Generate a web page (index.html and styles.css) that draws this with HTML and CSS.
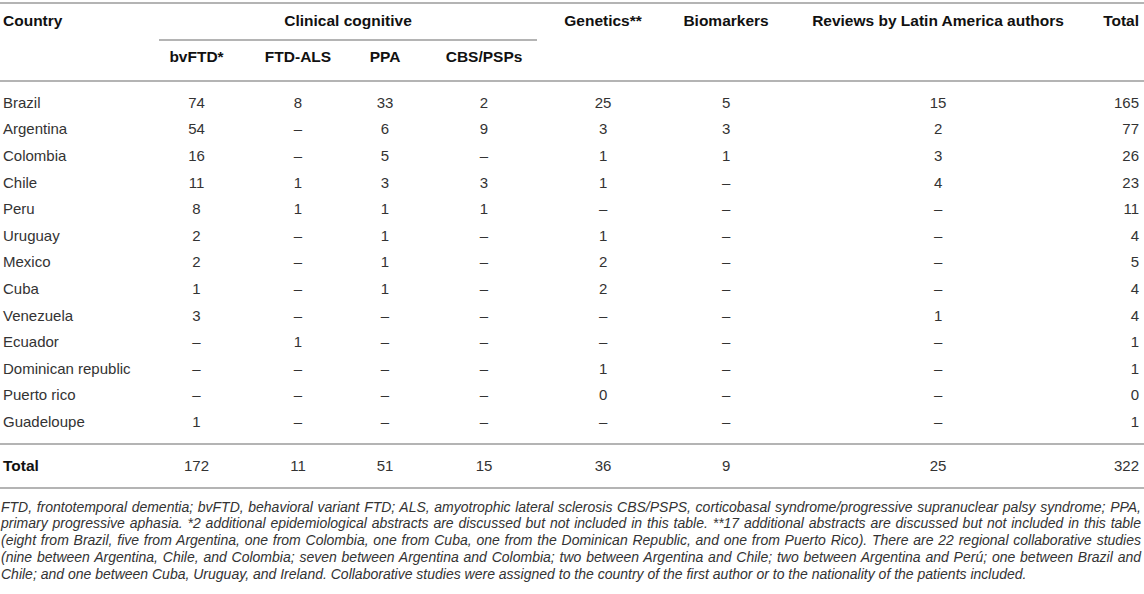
FILE: index.html
```html
<!DOCTYPE html>
<html lang="en">
<head>
<meta charset="utf-8">
<title>Table</title>
<link rel="stylesheet" href="styles.css">
</head>
<body>
<div class="page">
<table class="data">
  <colgroup>
    <col class="c1"><col class="c2"><col class="c3"><col class="c4"><col class="c5"><col class="c6"><col class="c7"><col class="c8"><col class="c9">
  </colgroup>
  <thead>
    <tr class="h1">
      <th rowspan="2" class="left">Country</th>
      <th colspan="4" class="group"><div class="group-label">Clinical cognitive</div></th>
      <th rowspan="2">Genetics**</th>
      <th rowspan="2">Biomarkers</th>
      <th rowspan="2">Reviews by Latin America authors</th>
      <th rowspan="2" class="right">Total</th>
    </tr>
    <tr class="h2">
      <th>bvFTD*</th>
      <th>FTD-ALS</th>
      <th>PPA</th>
      <th>CBS/PSPs</th>
    </tr>
  </thead>
  <tbody>
    <tr class="first"><td class="left">Brazil</td><td>74</td><td>8</td><td>33</td><td>2</td><td>25</td><td>5</td><td>15</td><td class="right">165</td></tr>
    <tr><td class="left">Argentina</td><td>54</td><td>–</td><td>6</td><td>9</td><td>3</td><td>3</td><td>2</td><td class="right">77</td></tr>
    <tr><td class="left">Colombia</td><td>16</td><td>–</td><td>5</td><td>–</td><td>1</td><td>1</td><td>3</td><td class="right">26</td></tr>
    <tr><td class="left">Chile</td><td>11</td><td>1</td><td>3</td><td>3</td><td>1</td><td>–</td><td>4</td><td class="right">23</td></tr>
    <tr><td class="left">Peru</td><td>8</td><td>1</td><td>1</td><td>1</td><td>–</td><td>–</td><td>–</td><td class="right">11</td></tr>
    <tr><td class="left">Uruguay</td><td>2</td><td>–</td><td>1</td><td>–</td><td>1</td><td>–</td><td>–</td><td class="right">4</td></tr>
    <tr><td class="left">Mexico</td><td>2</td><td>–</td><td>1</td><td>–</td><td>2</td><td>–</td><td>–</td><td class="right">5</td></tr>
    <tr><td class="left">Cuba</td><td>1</td><td>–</td><td>1</td><td>–</td><td>2</td><td>–</td><td>–</td><td class="right">4</td></tr>
    <tr><td class="left">Venezuela</td><td>3</td><td>–</td><td>–</td><td>–</td><td>–</td><td>–</td><td>1</td><td class="right">4</td></tr>
    <tr><td class="left">Ecuador</td><td>–</td><td>1</td><td>–</td><td>–</td><td>–</td><td>–</td><td>–</td><td class="right">1</td></tr>
    <tr><td class="left">Dominican republic</td><td>–</td><td>–</td><td>–</td><td>–</td><td>1</td><td>–</td><td>–</td><td class="right">1</td></tr>
    <tr><td class="left">Puerto rico</td><td>–</td><td>–</td><td>–</td><td>–</td><td>0</td><td>–</td><td>–</td><td class="right">0</td></tr>
    <tr class="last"><td class="left">Guadeloupe</td><td>1</td><td>–</td><td>–</td><td>–</td><td>–</td><td>–</td><td>–</td><td class="right">1</td></tr>
  </tbody>
  <tfoot>
    <tr class="total"><td class="left strong">Total</td><td>172</td><td>11</td><td>51</td><td>15</td><td>36</td><td>9</td><td>25</td><td class="right">322</td></tr>
  </tfoot>
</table>
<p class="note">FTD, frontotemporal dementia; bvFTD, behavioral variant FTD; ALS, amyotrophic lateral sclerosis CBS/PSPS, corticobasal syndrome/progressive supranuclear palsy syndrome; PPA, primary progressive aphasia. *2 additional epidemiological abstracts are discussed but not included in this table. **17 additional abstracts are discussed but not included in this table (eight from Brazil, five from Argentina, one from Colombia, one from Cuba, one from the Dominican Republic, and one from Puerto Rico). There are 22 regional collaborative studies (nine between Argentina, Chile, and Colombia; seven between Argentina and Colombia; two between Argentina and Chile; two between Argentina and Perú; one between Brazil and Chile; and one between Cuba, Uruguay, and Ireland. Collaborative studies were assigned to the country of the first author or to the nationality of the patients included.</p>
</div>
</body>
</html>
```

FILE: styles.css
```css
html, body {
  margin: 0;
  padding: 0;
  background: #ffffff;
}

.page {
  width: 1144px;
  padding-top: 2px;
  font-family: "Liberation Sans", Arial, sans-serif;
  font-size: 15px;
  color: #333333;
}

.data {
  width: 1144px;
  border-collapse: collapse;
  table-layout: fixed;
}

.c1 { width: 159px; }
.c2 { width: 75px; }
.c3 { width: 128px; }
.c4 { width: 46px; }
.c5 { width: 152px; }
.c6 { width: 86px; }
.c7 { width: 160px; }
.c8 { width: 264px; }
.c9 { width: 74px; }

.data thead {
  border-top: 2px solid #b4b4b4;
  border-bottom: 2px solid #b4b4b4;
}

.data th {
  font-weight: bold;
  font-size: 15.5px;
  color: #111111;
  text-align: center;
  vertical-align: top;
  padding: 8px 0 0 0;
  line-height: 18px;
  white-space: nowrap;
}

.data .h1 th {
  height: 29px;
}

.data .h2 th {
  padding-top: 7px;
  height: 32px;
}

.data th.group {
  padding: 0;
}

.group-label {
  margin-right: 23px;
  padding-top: 8px;
  height: 27px;
  border-bottom: 2px solid #b4b4b4;
}

.data td {
  text-align: center;
  height: 26.6px;
  padding: 0;
  line-height: 17px;
  vertical-align: middle;
  white-space: nowrap;
}

.data .left {
  text-align: left;
  padding-left: 3px;
}

.data .right {
  text-align: right;
  padding-right: 5px;
}

.data tr.first td {
  padding-top: 7px;
}

.data tr.last td {
  padding-bottom: 8px;
}

.data tfoot {
  border-top: 2px solid #b4b4b4;
  border-bottom: 2px solid #b4b4b4;
}

.data tr.total td {
  height: 42px;
}

.data td.strong {
  font-weight: bold;
  font-size: 15.5px;
  color: #111111;
}

.note {
  margin: 10px 0 0 0;
  padding: 0 3px 0 1px;
  font-style: italic;
  font-size: 14px;
  line-height: 16.7px;
  text-align: justify;
  color: #333333;
}
```
